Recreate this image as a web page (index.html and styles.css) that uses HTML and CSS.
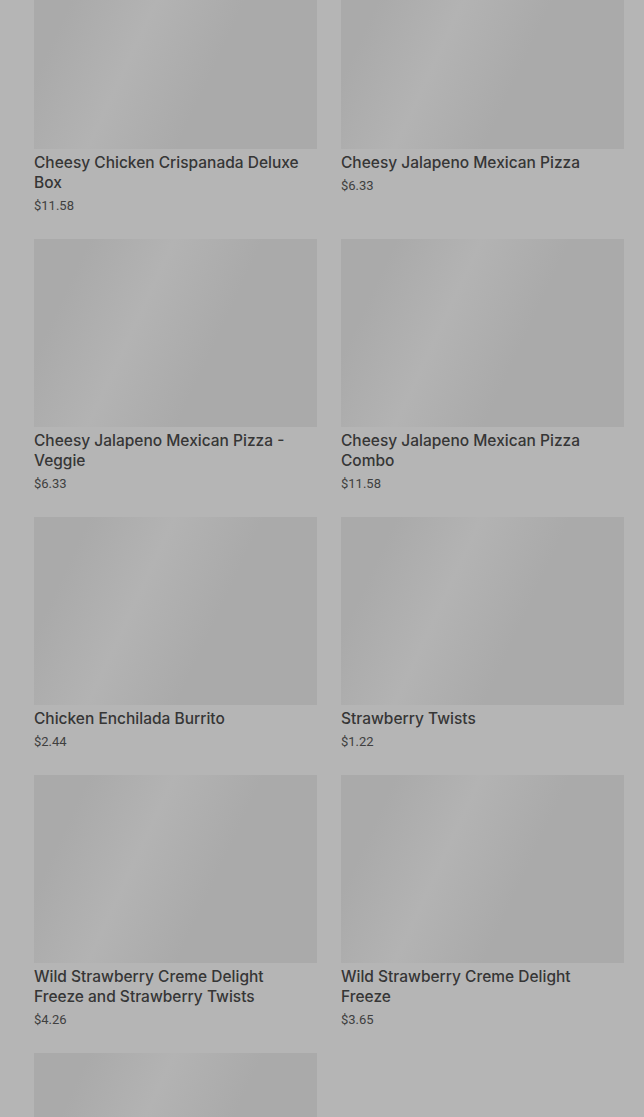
FILE: index.html
```html
<!DOCTYPE html>
<html lang="en">
<head>
  <meta charset="UTF-8">
  <title>Menu</title>
  <link rel="stylesheet" href="styles.css">
</head>
<body>

  <div class="menu">
    <div class="item">
      <div class="thumb"></div>
      <div class="name">Cheesy Chicken Crispanada Deluxe Box</div>
      <div class="price">$11.58</div>
    </div>
    <div class="item">
      <div class="thumb"></div>
      <div class="name">Cheesy Jalapeno Mexican Pizza</div>
      <div class="price">$6.33</div>
    </div>
    <div class="item">
      <div class="thumb"></div>
      <div class="name">Cheesy Jalapeno Mexican Pizza - Veggie</div>
      <div class="price">$6.33</div>
    </div>
    <div class="item">
      <div class="thumb"></div>
      <div class="name">Cheesy Jalapeno Mexican Pizza Combo</div>
      <div class="price">$11.58</div>
    </div>
    <div class="item">
      <div class="thumb"></div>
      <div class="name">Chicken Enchilada Burrito</div>
      <div class="price">$2.44</div>
    </div>
    <div class="item">
      <div class="thumb"></div>
      <div class="name">Strawberry Twists</div>
      <div class="price">$1.22</div>
    </div>
    <div class="item">
      <div class="thumb"></div>
      <div class="name">Wild Strawberry Creme Delight Freeze and Strawberry Twists</div>
      <div class="price">$4.26</div>
    </div>
    <div class="item">
      <div class="thumb"></div>
      <div class="name">Wild Strawberry Creme Delight Freeze</div>
      <div class="price">$3.65</div>
    </div>
    <div class="item">
      <div class="thumb"></div>
    </div>
  </div>

</body>
</html>
```

FILE: styles.css
```css
:root {
  --backdrop: #b5b5b5;
  --thumb: #aaaaaa;
  --shine: #b3b3b3;
  --text: #363636;
  --muted: #404040;
}

body {
  margin: 0;
  font-family: Inter, Roboto, 'Liberation Sans', sans-serif;
  background-color: var(--backdrop);
  height: 100vh;
  overflow: hidden;
}

.menu {
  display: grid;
  grid-template-columns: repeat(2, 283px);
  column-gap: 24px;
  row-gap: 24px;
  padding: 0 20px 0 34px;
  margin-top: -39px;
}

.thumb {
  height: 188px;
  background: linear-gradient(115deg, var(--thumb) 15%, var(--shine) 38%, var(--thumb) 62%);
  margin-bottom: 4px;
}

.name {
  font-size: 15.5px;
  font-weight: 500;
  line-height: 20px;
  color: var(--text);
}

.price {
  font-family: Roboto, 'Liberation Sans', sans-serif;
  font-size: 13px;
  line-height: 18px;
  margin-top: 4px;
  color: var(--muted);
}
```
